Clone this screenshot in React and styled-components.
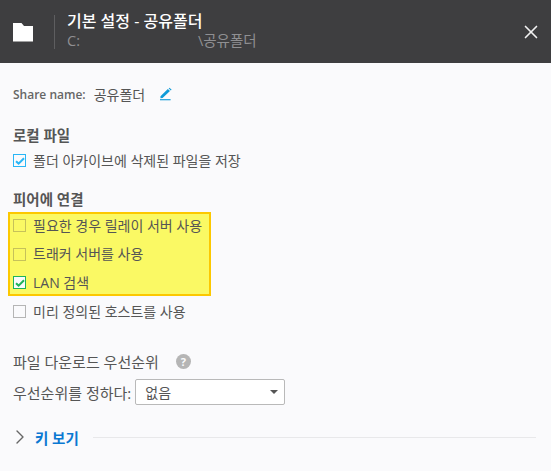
import React from "react"
import styled, { createGlobalStyle } from "styled-components"
import { X, ChevronRight } from "lucide-react"

const GlobalStyle = createGlobalStyle`
  html, body {
    margin: 0;
    padding: 0;
    background: #fafafc;
  }
  body {
    font-family: "Open Sans", "Noto Sans CJK KR", sans-serif;
    color: #555;
  }
`

const CheckRow = ({ checked, color, line, children }) => (
  <Row>
    <Box $checked={checked} $line={line}>
      {checked && (
        <svg width="10" height="8" viewBox="0 0 10 8">
          <path d="M1 4.2 L3.6 6.6 L9 1.2" fill="none" stroke={color} strokeWidth="2" />
        </svg>
      )}
    </Box>
    <span>{children}</span>
  </Row>
)

const App = () => {
  return (
    <>
      <GlobalStyle />
      <Page>
        <Header>
          <FolderCell>
            <svg width="20" height="20" viewBox="0 0 20 20">
              <path d="M0 1 H8.5 L11 4 H20 V19.5 H0 Z" fill="#fff" />
            </svg>
          </FolderCell>
          <HeaderText>
            <Title>기본 설정 - 공유폴더</Title>
            <PathLine>
              <span>C:</span>
              <span>\공유폴더</span>
            </PathLine>
          </HeaderText>
          <CloseButton>
            <X size={22} strokeWidth={1.8} color="#f2f2f2" />
          </CloseButton>
        </Header>
        <Content>
          <ShareLine>
            <ShareLabel>Share name:</ShareLabel>
            <span>공유폴더</span>
            <PencilIcon width="12" height="14" viewBox="0 0 13 14">
              <path d="M0.5 9.5 L8.5 1.5 L10.8 3.8 L2.8 11.2 L0.5 11.5 Z M9.4 0.8 L10.3 0.2 L12.6 2.4 L11.6 3.2 Z" fill="#0e9bd8" />
              <rect x="0" y="12.6" width="11.5" height="1.2" fill="#0e9bd8" />
            </PencilIcon>
          </ShareLine>

          <SectionTitle $top={22}>로컬 파일</SectionTitle>
          <CheckRow checked color="#29b6f6" line="#29b6f6">폴더 아카이브에 삭제된 파일을 저장</CheckRow>

          <SectionTitle $top={15}>피어에 연결</SectionTitle>
          <Highlight>
            <CheckRow line="#c6c25a">필요한 경우 릴레이 서버 사용</CheckRow>
            <CheckRow line="#c6c25a">트래커 서버를 사용</CheckRow>
            <CheckRow checked color="#1fb35a" line="#1fb35a">LAN 검색</CheckRow>
          </Highlight>
          <CheckRow line="#b5b5b5">미리 정의된 호스트를 사용</CheckRow>

          <PriorityTitle>
            <span>파일 다운로드 우선순위</span>
            <HelpDot>?</HelpDot>
          </PriorityTitle>
          <SelectLine>
            <span>우선순위를 정하다:</span>
            <SelectBox>
              <span>없음</span>
              <Caret />
            </SelectBox>
          </SelectLine>

          <KeyLine>
            <ChevronIcon>
              <ChevronRight size={24} strokeWidth={1.4} color="#666" />
            </ChevronIcon>
            <KeyLabel>키 보기</KeyLabel>
            <Rule />
          </KeyLine>
        </Content>
      </Page>
    </>
  )
}

export default App

const Page = styled.div`
  width: 551px;
  height: 471px;
  overflow: hidden;
  background: #fafafc;
`

const Header = styled.header`
  display: flex;
  align-items: center;
  height: 63px;
  background: #3e3e40;
`

const FolderCell = styled.div`
  display: flex;
  align-items: center;
  width: 41px;
  height: 34px;
  margin-left: 13px;
  border-right: 1px solid #5e5e60;
`

const HeaderText = styled.div`
  display: flex;
  flex-direction: column;
  flex: 1;
  margin-top: -2px;
  padding-left: 12px;
  gap: 1px;
`

const Title = styled.div`
  color: #fff;
  font-size: 16px;
  font-weight: 500;
  line-height: 20px;
`

const PathLine = styled.div`
  display: flex;
  gap: 118px;
  color: #8f8f92;
  font-size: 14.5px;
  line-height: 18px;
`

const CloseButton = styled.div`
  display: flex;
  margin-right: 9px;
  margin-top: 1px;
`

const Content = styled.main`
  display: flex;
  flex-direction: column;
  padding: 21px 0 0 13px;
  font-size: 14px;
`

const ShareLine = styled.div`
  display: flex;
  align-items: center;
  height: 20px;
  gap: 8px;
`

const ShareLabel = styled.span`
  font-weight: 600;
  font-size: 12px;
  color: #666;
`

const PencilIcon = styled.svg`
  margin-left: 7px;
`

const SectionTitle = styled.div`
  margin-top: ${(p) => p.$top}px;
  font-weight: 700;
  font-size: 14.5px;
  line-height: 20px;
  color: #555;
`

const Row = styled.label`
  display: flex;
  align-items: center;
  height: 29px;
  gap: 7px;
  line-height: 20px;
  color: #555;
`

const Box = styled.span`
  display: flex;
  align-items: center;
  justify-content: center;
  width: 11px;
  height: 11px;
  border: 1px solid ${(p) => p.$line};
  background: ${(p) => (p.$checked ? "#fafafc" : "transparent")};
`

const Highlight = styled.div`
  display: grid;
  grid-template-rows: repeat(3, 28.5px);
  align-content: center;
  width: 203px;
  height: 84px;
  margin: 2px 0 1px -5px;
  padding-left: 3px;
  box-sizing: border-box;
  background: #faf964;
  border: 2px solid #fcc800;
`

const PriorityTitle = styled.div`
  display: flex;
  align-items: center;
  gap: 17px;
  margin-top: 25px;
  height: 20px;
  font-size: 15px;
`

const HelpDot = styled.span`
  display: flex;
  align-items: center;
  justify-content: center;
  width: 15px;
  height: 15px;
  border-radius: 50%;
  background: #b5b5b5;
  color: #fafafc;
  font-size: 11px;
  font-weight: 700;
`

const SelectLine = styled.div`
  display: flex;
  align-items: center;
  gap: 4px;
  margin-top: 8px;
  font-size: 15px;
`

const SelectBox = styled.div`
  display: flex;
  align-items: center;
  justify-content: space-between;
  box-sizing: border-box;
  width: 150px;
  height: 26px;
  padding: 0 6px 0 9px;
  border: 1px solid #b9b9b9;
  border-radius: 2px;
  background: #fff;
  font-size: 14px;
`

const Caret = styled.span`
  width: 0;
  height: 0;
  border-left: 4px solid transparent;
  border-right: 4px solid transparent;
  border-top: 4px solid #555;
`

const KeyLine = styled.div`
  display: flex;
  align-items: center;
  margin-top: 22px;
  height: 20px;
`

const ChevronIcon = styled.span`
  display: flex;
  margin-left: -5px;
`

const KeyLabel = styled.span`
  margin-left: 3px;
  color: #0a78d2;
  font-weight: 700;
  font-size: 14.5px;
`

const Rule = styled.span`
  flex: 1;
  height: 1px;
  margin: 0 15px 0 14px;
  background: #e8e8ea;
`
